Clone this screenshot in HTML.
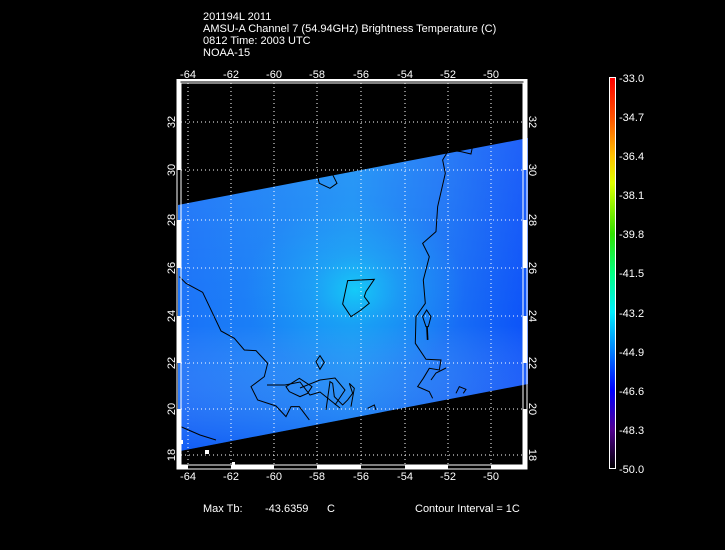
<!DOCTYPE html>
<html><head><style>
html,body{margin:0;padding:0;background:#000;width:725px;height:550px;overflow:hidden}
svg{display:block}
text{font-family:"Liberation Sans",sans-serif;fill:#fff;font-size:11px}
</style></head><body>
<svg width="725" height="550" viewBox="0 0 725 550">
<defs>
<linearGradient id="g" x1="0" y1="0" x2="1" y2="0">
<stop offset="0" stop-color="#1a72f8"/>
<stop offset="0.5" stop-color="#1a90f5"/>
<stop offset="0.75" stop-color="#1a74f5"/>
<stop offset="1" stop-color="#0c52f8"/>
</linearGradient>
<radialGradient id="r" cx="0.5" cy="0.5" r="0.5">
<stop offset="0" stop-color="#10d0f8" stop-opacity="0.9"/>
<stop offset="0.4" stop-color="#18b0f5" stop-opacity="0.5"/>
<stop offset="1" stop-color="#18a0f5" stop-opacity="0"/>
</radialGradient>
<linearGradient id="v" x1="0" y1="0" x2="0" y2="1">
<stop offset="0" stop-color="#ffffff" stop-opacity="0.08"/>
<stop offset="0.6" stop-color="#ffffff" stop-opacity="0"/>
<stop offset="1" stop-color="#0030f0" stop-opacity="0.35"/>
</linearGradient>
<linearGradient id="cb" x1="0" y1="0" x2="0" y2="1">
<stop offset="0" stop-color="#ff0000"/>
<stop offset="0.1" stop-color="#ff5000"/>
<stop offset="0.2" stop-color="#ffc000"/>
<stop offset="0.27" stop-color="#e0ff00"/>
<stop offset="0.4" stop-color="#30e000"/>
<stop offset="0.5" stop-color="#00ff80"/>
<stop offset="0.6" stop-color="#00f0ff"/>
<stop offset="0.7" stop-color="#0080ff"/>
<stop offset="0.8" stop-color="#0000ff"/>
<stop offset="0.9" stop-color="#500090"/>
<stop offset="1" stop-color="#000000"/>
</linearGradient>
</defs>
<text x="203" y="20">201194L 2011</text>
<text x="203" y="32">AMSU-A Channel 7 (54.94GHz) Brightness Temperature (C)</text>
<text x="203" y="44">0812 Time: 2003 UTC</text>
<text x="203" y="56">NOAA-15</text>

<!-- swath -->
<polygon points="178,205 528,138 528,384 180,451 178,451" fill="url(#g)"/>
<ellipse cx="355" cy="290" rx="110" ry="90" fill="url(#r)"/>
<polygon points="178,205 528,138 528,384 180,451 178,451" fill="url(#v)"/>

<!-- grid -->
<g stroke="#fff" stroke-width="1" stroke-dasharray="1,3">
<line x1="188" y1="83" x2="188" y2="465"/><line x1="231" y1="83" x2="231" y2="465"/>
<line x1="274" y1="83" x2="274" y2="465"/><line x1="317" y1="83" x2="317" y2="465"/>
<line x1="361" y1="83" x2="361" y2="465"/><line x1="405" y1="83" x2="405" y2="465"/>
<line x1="448" y1="83" x2="448" y2="465"/><line x1="491" y1="83" x2="491" y2="465"/>
<line x1="181" y1="122" x2="523" y2="122"/><line x1="181" y1="170" x2="523" y2="170"/>
<line x1="181" y1="220" x2="523" y2="220"/><line x1="181" y1="268" x2="523" y2="268"/>
<line x1="181" y1="316" x2="523" y2="316"/><line x1="181" y1="363" x2="523" y2="363"/>
<line x1="181" y1="409" x2="523" y2="409"/><line x1="181" y1="455" x2="523" y2="455"/>
</g>

<!-- contours -->
<g transform="translate(176,130) scale(0.3333)" fill="none" stroke="#000" stroke-width="3">
<polyline points="10,440 30,460 80,487 135,603 175,625 205,660 240,662 275,700 265,740 225,770 245,810 300,828 330,860 345,830 370,830 400,870"/>
<polygon points="515,452 595,448 570,485 565,500 580,520 555,540 525,560 500,522"/>
<polyline points="420,120 430,160 462,175 483,160 463,120"/>
<polyline points="890,48 885,72 855,65 818,60 800,90 808,130 785,230 780,305 740,340 760,380 742,450 748,520 720,560 718,640 750,688 795,690 790,720 760,715 742,745 725,770 760,785 770,805"/>
<polygon points="740,560 752,540 765,560 757,590 750,590"/>
<line x1="753" y1="590" x2="755" y2="630" stroke-width="5"/>
<polygon points="420,695 432,677 445,697 432,718"/>
<polygon points="330,770 370,745 408,770 395,790 372,800 340,785"/>
<polyline points="450,840 462,755 470,760 475,800 500,825 515,810 530,790 520,760 535,775 525,830"/>
<polyline points="575,835 595,825 600,840"/>
<polyline points="840,790 850,770 870,778 862,790"/>
</g>
<g fill="none" stroke="#000" stroke-width="1">
<polyline points="177,425 200,435 216,440"/>
<polyline points="267,385 285,385 300,382 310,395 320,392 340,408"/>
<polyline points="300,388 320,380 335,378 345,390 335,405"/>
<polyline points="431,380 436,373 446,368"/>
</g>

<!-- frame -->
<rect x="177" y="79.5" width="350" height="389.5" fill="none" stroke="#fff" stroke-width="1"/>
<rect x="181" y="83" width="342" height="382" fill="none" stroke="#fff" stroke-width="1"/>
<g fill="#fff">
<rect x="177" y="79" width="350" height="2.5"/>
<rect x="177" y="79" width="3.5" height="91"/><rect x="177" y="220" width="3.5" height="48"/>
<rect x="177" y="316" width="3.5" height="47"/><rect x="177" y="409" width="3.5" height="60"/>
<rect x="523.5" y="79" width="3.5" height="91"/><rect x="523.5" y="220" width="3.5" height="48"/>
<rect x="523.5" y="316" width="3.5" height="47"/><rect x="523.5" y="409" width="3.5" height="60"/>
<rect x="177" y="465" width="11" height="4"/><rect x="231" y="465" width="43" height="4"/>
<rect x="317" y="465" width="44" height="4"/><rect x="405" y="465" width="43" height="4"/>
<rect x="491" y="465" width="36" height="4"/>
<rect x="180" y="440" width="3" height="4"/><rect x="205" y="450" width="4" height="4"/><rect x="232" y="462" width="3" height="3"/>
</g>

<!-- axis labels -->
<g text-anchor="middle">
<text x="188" y="78">-64</text><text x="231" y="78">-62</text><text x="274" y="78">-60</text><text x="317" y="78">-58</text>
<text x="361" y="78">-56</text><text x="405" y="78">-54</text><text x="448" y="78">-52</text><text x="491" y="78">-50</text>
<text x="188" y="480">-64</text><text x="231" y="480">-62</text><text x="274" y="480">-60</text><text x="317" y="480">-58</text>
<text x="361" y="480">-56</text><text x="405" y="480">-54</text><text x="448" y="480">-52</text><text x="491" y="480">-50</text>
<text transform="translate(175,122) rotate(-90)">32</text>
<text transform="translate(175,170) rotate(-90)">30</text>
<text transform="translate(175,220) rotate(-90)">28</text>
<text transform="translate(175,268) rotate(-90)">26</text>
<text transform="translate(175,316) rotate(-90)">24</text>
<text transform="translate(175,363) rotate(-90)">22</text>
<text transform="translate(175,409) rotate(-90)">20</text>
<text transform="translate(175,455) rotate(-90)">18</text>
<text transform="translate(529,122) rotate(90)">32</text>
<text transform="translate(529,170) rotate(90)">30</text>
<text transform="translate(529,220) rotate(90)">28</text>
<text transform="translate(529,268) rotate(90)">26</text>
<text transform="translate(529,316) rotate(90)">24</text>
<text transform="translate(529,363) rotate(90)">22</text>
<text transform="translate(529,409) rotate(90)">20</text>
<text transform="translate(529,455) rotate(90)">18</text>
</g>

<!-- colorbar -->
<rect x="609.5" y="77.5" width="6" height="391" fill="url(#cb)" stroke="#fff" stroke-width="1"/>
<g>
<text x="619" y="82">-33.0</text><text x="619" y="121">-34.7</text><text x="619" y="160">-36.4</text>
<text x="619" y="199">-38.1</text><text x="619" y="238">-39.8</text><text x="619" y="277">-41.5</text>
<text x="619" y="317">-43.2</text><text x="619" y="356">-44.9</text><text x="619" y="395">-46.6</text>
<text x="619" y="434">-48.3</text><text x="619" y="473">-50.0</text>
</g>

<text x="203" y="512">Max Tb:</text>
<text x="265" y="512">-43.6359</text>
<text x="327" y="512">C</text>
<text x="415" y="512">Contour Interval = 1C</text>
</svg>
</body></html>
